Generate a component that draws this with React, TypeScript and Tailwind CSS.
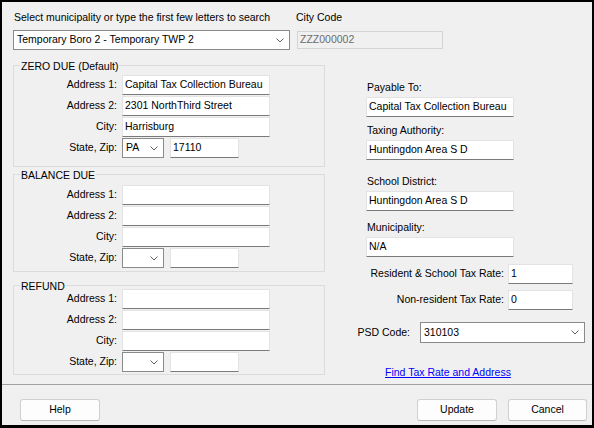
import React from 'react';

function Chevron() {
  return (
    <svg width="8" height="5" viewBox="0 0 8 5" className="shrink-0">
      <polyline points="0.5,0.5 4,4 7.5,0.5" fill="none" stroke="#606060" strokeWidth="1" />
    </svg>
  );
}

function TextBox({ value = '', className = '' }: { value?: string; className?: string }) {
  return (
    <div
      className={`h-[20px] bg-white border border-[#e3e3e3] border-b-[#7a7a7a] pl-[2px] flex items-center whitespace-nowrap overflow-hidden ${className}`}
    >
      {value}
    </div>
  );
}

function Combo({ value = '', className = '' }: { value?: string; className?: string }) {
  return (
    <div
      className={`h-[20px] bg-white border border-[#8a8a8a] pl-[3px] pr-[5px] flex items-center justify-between whitespace-nowrap ${className}`}
    >
      <span>{value}</span>
      <Chevron />
    </div>
  );
}

type Address = { a1: string; a2: string; city: string; state: string; zip: string };

function Group({ title, data, className }: { title: string; data: Address; className: string }) {
  const rows: [string, string][] = [
    ['Address 1:', data.a1],
    ['Address 2:', data.a2],
    ['City:', data.city],
  ];
  return (
    <div className={`relative border border-[#dcdcdc] flex flex-col gap-[1px] ${className}`}>
      <span className="absolute left-[6px] top-[-7px] px-[1px] leading-[14px] bg-[#f0f0f0]">{title}</span>
      {rows.map(([label, value]) => (
        <div key={label} className="flex items-center">
          <span className="w-[103px] text-right">{label}</span>
          <TextBox value={value} className="ml-[5px] w-[148px]" />
        </div>
      ))}
      <div className="flex items-center">
        <span className="w-[103px] text-right">State, Zip:</span>
        <Combo value={data.state} className="ml-[5px] w-[42px] pl-[2px]" />
        <TextBox value={data.zip} className="ml-[6px] w-[69px]" />
      </div>
    </div>
  );
}

const empty: Address = { a1: '', a2: '', city: '', state: '', zip: '' };

export default function App() {
  return (
    <div className="w-[594px] h-[428px] border-2 border-b-[3px] border-black bg-[#f0f0f0] flex flex-col text-[10.5px] text-black font-['Liberation_Sans',Arial,sans-serif]">
      <div className="flex pl-[11px] pt-[8px]">
        <div className="flex flex-col w-[277px]">
          <div className="leading-[14px] pl-[1px]">Select municipality or type the first few letters to search</div>
          <Combo value="Temporary Boro 2 - Temporary TWP 2" className="mt-[6px]" />
        </div>
        <div className="flex flex-col ml-[6px]">
          <div className="leading-[14px]">City Code</div>
          <div className="mt-[7px] ml-[1px] w-[146px] h-[18px] border border-[#d4d4d4] pl-[2px] flex items-center text-[#6d6d6d]">
            ZZZ000002
          </div>
        </div>
      </div>

      <div className="flex pl-[11px] h-[334px]">
        <div className="flex flex-col w-[312px] mt-[15px]">
          <Group
            title="ZERO DUE (Default)"
            data={{
              a1: 'Capital Tax Collection Bureau',
              a2: '2301 NorthThird Street',
              city: 'Harrisburg',
              state: 'PA',
              zip: '17110',
            }}
            className="pt-[9px] pb-[8px]"
          />
          <Group title="BALANCE DUE" data={empty} className="mt-[7px] pt-[10px] pb-[3px]" />
          <Group title="REFUND" data={empty} className="mt-[13px] pt-[3px] pb-[2px]" />
        </div>

        <div className="flex flex-col w-[230px] ml-[30px]">
          <div className="mt-[30px] ml-[12px] leading-[14px]">Payable To:</div>
          <TextBox value="Capital Tax Collection Bureau" className="mt-[3px] ml-[11px] w-[148px]" />
          <div className="mt-[6px] ml-[12px] leading-[14px]">Taxing Authority:</div>
          <TextBox value="Huntingdon Area S D" className="mt-[3px] ml-[11px] w-[148px]" />
          <div className="mt-[14px] ml-[12px] leading-[14px]">School District:</div>
          <TextBox value="Huntingdon Area S D" className="mt-[3px] ml-[11px] w-[148px]" />
          <div className="mt-[9px] ml-[12px] leading-[14px]">Municipality:</div>
          <TextBox value="N/A" className="mt-[3px] ml-[11px] w-[148px]" />

          <div className="mt-[7px] pr-[12px] flex items-center justify-end">
            <span>Resident &amp; School Tax Rate:</span>
            <TextBox value="1" className="ml-[4px] w-[65px]" />
          </div>
          <div className="mt-[6px] pr-[12px] flex items-center justify-end">
            <span>Non-resident Tax Rate:</span>
            <TextBox value="0" className="ml-[4px] w-[65px]" />
          </div>
          <div className="mt-[12px] flex items-center justify-end">
            <span>PSD Code:</span>
            <Combo value="310103" className="ml-[10px] w-[165px] h-[21px]" />
          </div>
          <a className="mt-[22px] ml-[30px] leading-[14px] text-[#0000ff] underline">Find Tax Rate and Address</a>
        </div>
      </div>

      <div className="h-[1px] bg-[#a0a0a0]" />

      <div className="flex items-center pt-[14px] pl-[18px] pr-[5px]">
        <button className="w-[80px] h-[22px] bg-[#fdfdfd] border border-[#d0d0d0] border-b-[#b8b8b8] rounded-[3px]">Help</button>
        <div className="flex-1" />
        <button className="w-[80px] h-[22px] bg-[#fdfdfd] border border-[#d0d0d0] border-b-[#b8b8b8] rounded-[3px]">Update</button>
        <button className="ml-[11px] w-[79px] h-[22px] bg-[#fdfdfd] border border-[#d0d0d0] border-b-[#b8b8b8] rounded-[3px]">Cancel</button>
      </div>
    </div>
  );
}
